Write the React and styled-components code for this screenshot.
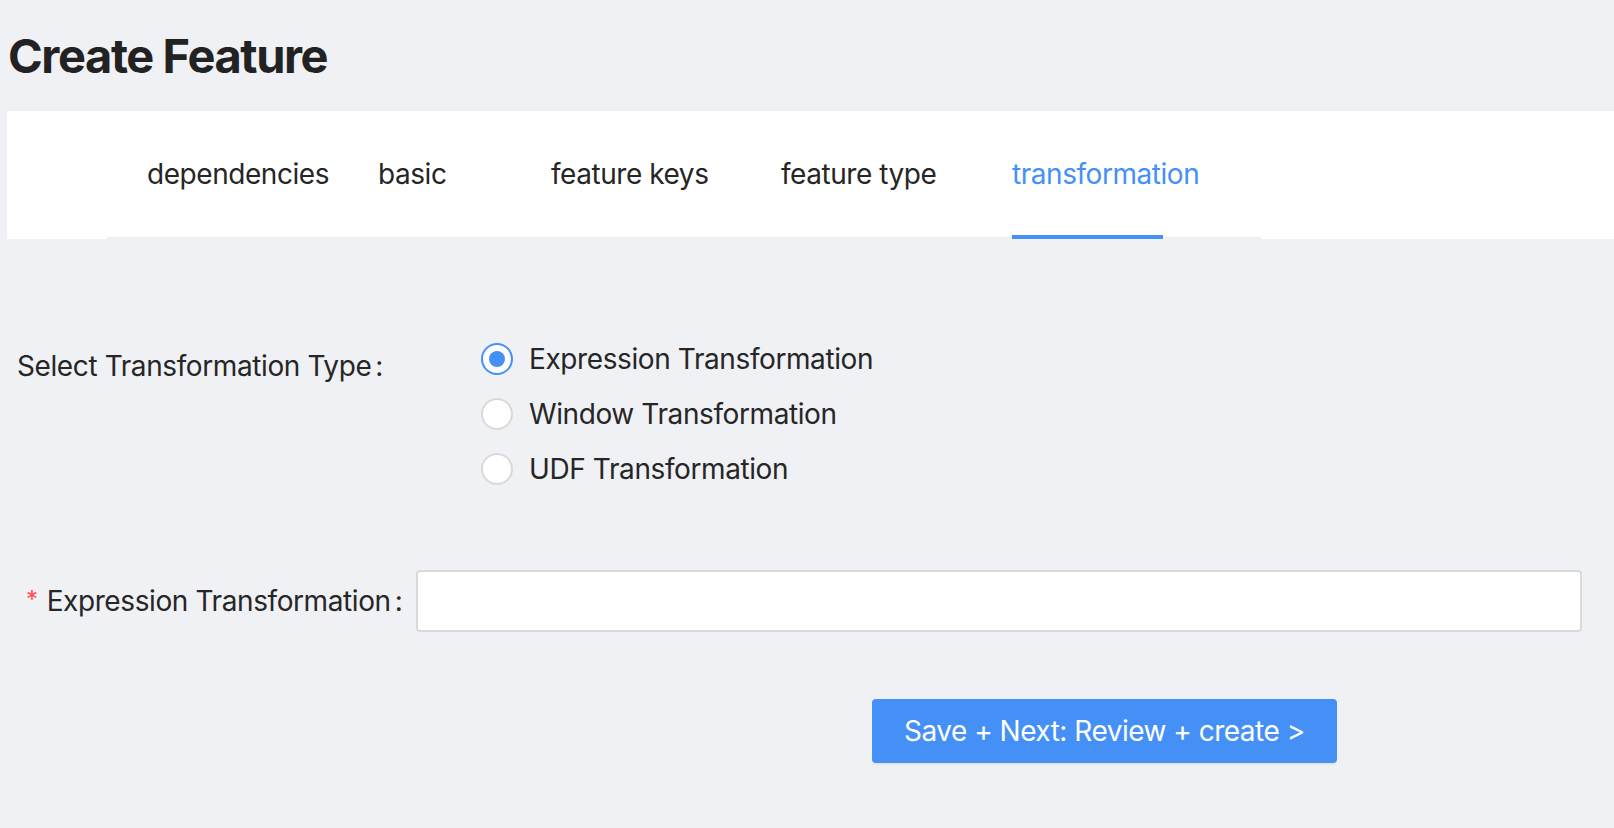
import React from "react";
import styled, { createGlobalStyle } from "styled-components";

const GlobalStyle = createGlobalStyle`
  html, body {
    margin: 0;
    padding: 0;
    background: #f0f1f5;
  }
  body {
    font-family: Inter, "Noto Sans", "Liberation Sans", sans-serif;
    color: #262626;
  }
  * { box-sizing: border-box; }
`;

const Page = styled.div`
  min-height: 828px;
  background: #f0f1f5;
`;

const TitleBar = styled.header`
  height: 111px;
  display: flex;
  align-items: center;
  padding-left: 8px;
`;

const Title = styled.h1`
  margin: 0;
  font-size: 47px;
  line-height: 1;
  font-weight: 700;
  letter-spacing: -1.4px;
  color: #222;
`;

const TabsCard = styled.div`
  margin-left: 7px;
  height: 128px;
  background: #fff;
  display: flex;
  padding-left: 100px;
`;

const TabNav = styled.nav`
  width: 1154px;
  height: 128px;
  border-bottom: 2px solid #eef0f3;
  display: flex;
  padding-left: 40px;
`;

const Tab = styled.div`
  position: relative;
  width: ${(p) => (p.$w ? `${p.$w}px` : "auto")};
  flex-shrink: 0;
  display: flex;
  align-items: center;
  font-size: 28px;
  letter-spacing: -0.45px;
  white-space: nowrap;
  color: ${(p) => (p.$active ? "#4590f7" : "#262626")};
  &::after {
    content: "";
    display: ${(p) => (p.$active ? "block" : "none")};
    position: absolute;
    left: 0;
    bottom: -2px;
    width: 151px;
    height: 4px;
    background: #4590f7;
  }
`;

const Form = styled.form`
  padding-left: 17px;
  padding-top: 92px;
`;

const RadioRow = styled.div`
  display: flex;
  align-items: flex-start;
`;

const FieldLabel = styled.label`
  width: ${(p) => p.$w}px;
  flex-shrink: 0;
  font-size: 28px;
  letter-spacing: -0.4px;
  white-space: nowrap;
  color: #262626;
  line-height: ${(p) => p.$lh}px;
  margin-top: ${(p) => p.$mt || 0}px;
  padding-left: ${(p) => p.$pl || 0}px;
  &::after {
    content: ":";
    margin-left: ${(p) => p.$colonGap}px;
  }
`;

const Required = styled.span`
  color: #ff4d4f;
  font-size: 24px;
  margin-right: 9px;
  vertical-align: 3px;
`;

const RadioGroup = styled.div`
  display: flex;
  flex-direction: column;
`;

const RadioItem = styled.label`
  height: 55px;
  display: flex;
  align-items: center;
  gap: 16px;
  font-size: 28px;
  letter-spacing: -0.4px;
  color: #262626;
  white-space: nowrap;
`;

const RadioCircle = styled.span`
  width: 32px;
  height: 32px;
  border-radius: 50%;
  background: #fff;
  border: 2px solid ${(p) => (p.$checked ? "#4590f7" : "#d9d9d9")};
  display: flex;
  align-items: center;
  justify-content: center;
  flex-shrink: 0;
  &::after {
    content: "";
    display: ${(p) => (p.$checked ? "block" : "none")};
    width: 16px;
    height: 16px;
    border-radius: 50%;
    background: #4590f7;
  }
`;

const InputRow = styled.div`
  display: flex;
  align-items: center;
  margin-top: 73px;
`;

const TextInput = styled.input`
  width: 1166px;
  height: 62px;
  border: 2px solid #d9d9d9;
  border-radius: 4px;
  background: #fff;
  font-size: 28px;
  font-family: inherit;
  padding: 0 22px;
  outline: none;
`;

const Actions = styled.div`
  margin-top: 67px;
  padding-left: 855px;
`;

const PrimaryButton = styled.button`
  height: 64px;
  padding: 0 32px;
  border: none;
  border-radius: 4px;
  background: #4590f7;
  color: #fff;
  font-family: inherit;
  font-size: 28px;
  letter-spacing: -0.5px;
  white-space: nowrap;
  box-shadow: 0 2px 0 rgba(0, 0, 0, 0.045);
  cursor: pointer;
`;

const tabs = [
  { label: "dependencies", w: 231 },
  { label: "basic", w: 173 },
  { label: "feature keys", w: 230 },
  { label: "feature type", w: 231 },
  { label: "transformation", active: true },
];

const options = [
  { label: "Expression Transformation", checked: true },
  { label: "Window Transformation" },
  { label: "UDF Transformation" },
];

export default function App() {
  return (
    <Page>
      <GlobalStyle />
      <TitleBar>
        <Title>Create Feature</Title>
      </TitleBar>
      <TabsCard>
        <TabNav>
          {tabs.map((t) => (
            <Tab key={t.label} $w={t.w} $active={t.active}>
              {t.label}
            </Tab>
          ))}
        </TabNav>
      </TabsCard>
      <Form onSubmit={(e) => e.preventDefault()}>
        <RadioRow>
          <FieldLabel $w={464} $lh={55} $mt={8} $colonGap={4}>
            Select Transformation Type
          </FieldLabel>
          <RadioGroup>
            {options.map((o) => (
              <RadioItem key={o.label}>
                <RadioCircle $checked={o.checked} />
                {o.label}
              </RadioItem>
            ))}
          </RadioGroup>
        </RadioRow>
        <InputRow>
          <FieldLabel $w={399} $lh={62} $pl={9} $colonGap={4}>
            <Required>*</Required>
            Expression Transformation
          </FieldLabel>
          <TextInput type="text" />
        </InputRow>
        <Actions>
          <PrimaryButton type="button">Save + Next: Review + create &gt;</PrimaryButton>
        </Actions>
      </Form>
    </Page>
  );
}
